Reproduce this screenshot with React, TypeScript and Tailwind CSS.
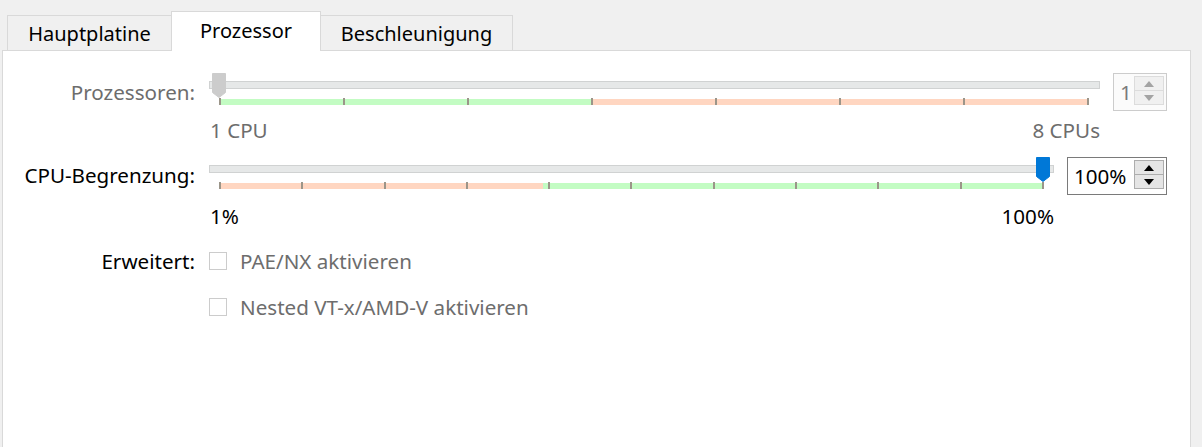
import React from "react";

const FONT = { fontFamily: '"Noto Sans", "Open Sans", sans-serif' };

type SliderProps = {
  ticks: number;
  split: string;
  lowColor: string;
  highColor: string;
  handlePos: "start" | "end";
  disabled?: boolean;
  minLabel: string;
  maxLabel: string;
  tickInset: string;
  labelGap: string;
};

function Handle({ blue }: { blue?: boolean }) {
  return (
    <svg width="14" height="25" viewBox="0 0 14 25">
      <path
        d="M0.5 0.5 H13.5 V19.5 L7 24.5 L0.5 19.5 Z"
        fill={blue ? "#0078d7" : "#cccccc"}
        stroke={blue ? "#0078d7" : "#cccccc"}
      />
    </svg>
  );
}

function Slider(props: SliderProps) {
  const tickList = Array.from({ length: props.ticks });
  return (
    <div className="flex-1 flex flex-col">
      <div className="relative h-[32px]">
        {/* groove */}
        <div className="mt-[8px] h-[8px] border border-[#d0d2d2] bg-[#e6e8e8]" />
        {/* tick bar */}
        <div className={"relative mt-[9px] h-[7px] ml-[10px] " + props.tickInset}>
          <div className="absolute left-0 right-0 bottom-0 h-[6px] flex">
            <div className={props.lowColor} style={{ width: props.split }} />
            <div className={"flex-1 " + props.highColor} />
          </div>
          <div className="absolute inset-0 flex justify-between">
            {tickList.map((_, i) => (
              <div key={i} className="w-[2px] h-full bg-[#9b9589] -ml-px first:ml-0" />
            ))}
          </div>
        </div>
        {props.handlePos === "start" ? (
          <div className="absolute top-0 left-[3px]">
            <Handle />
          </div>
        ) : (
          <div className="absolute top-0 right-[4px]">
            <Handle blue />
          </div>
        )}
      </div>
      <div
        className={
          "flex justify-between text-[20.6px] leading-[28px] pl-px " +
          props.labelGap +
          (props.disabled ? " text-[#6d6d6d]" : " text-black")
        }
      >
        <span>{props.minLabel}</span>
        <span>{props.maxLabel}</span>
      </div>
    </div>
  );
}

function Arrow({ up, color }: { up?: boolean; color: string }) {
  return (
    <svg width="10" height="6" viewBox="0 0 10 6">
      <path d={up ? "M0 6 L5 0 L10 6 Z" : "M0 0 L5 6 L10 0 Z"} fill={color} />
    </svg>
  );
}

function SpinBox({
  value,
  width,
  disabled,
}: {
  value: string;
  width: string;
  disabled?: boolean;
}) {
  const btn = disabled
    ? "border border-[#dcdcdc] bg-[#f0f0f0]"
    : "border border-[#adadad] bg-[#e5e5e5]";
  const arrow = disabled ? "#a3a3a3" : "#000000";
  return (
    <div
      className={
        "flex h-[38px] items-start " +
        width +
        (disabled
          ? " border border-[#cccccc] bg-[#fbfbfb]"
          : " border border-[#7a7a7a] bg-white")
      }
    >
      <div
        className={
          "flex-1 pl-[6px] text-[20.6px] leading-[36px] " +
          (disabled ? "text-[#7a7a7a]" : "text-black")
        }
      >
        {value}
      </div>
      <div className="mt-[2px] mr-[2px] flex flex-col w-[30px]">
        <div className={"h-[15px] flex items-center justify-center " + btn}>
          <Arrow up color={arrow} />
        </div>
        <div className={"h-[15px] -mt-px flex items-center justify-center " + btn}>
          <Arrow color={arrow} />
        </div>
      </div>
    </div>
  );
}

function CheckRow({ text }: { text: string }) {
  return (
    <div className="flex items-center gap-[13px] h-[28px]">
      <div className="w-[18px] h-[18px] border border-[#cccccc] bg-white" />
      <span className="text-[20.6px] leading-[28px] text-[#6d6d6d]">{text}</span>
    </div>
  );
}

export default function App() {
  return (
    <div className="w-[1202px] h-[447px] bg-[#f0f0f0] flex flex-col overflow-hidden" style={FONT}>
      {/* tabs */}
      <div className="pt-[11px] pl-[7px] flex items-end h-[50px]">
        <div className="w-[164px] h-[35px] border-t border-l border-[#d9d9d9] bg-[#f0f0f0] text-center text-[20px] leading-[28px] pt-[4px] text-black">
          Hauptplatine
        </div>
        <div className="relative z-10 -mb-px w-[150px] h-[40px] border-t border-x border-[#d9d9d9] bg-white text-center text-[20px] leading-[28px] pt-[5px] text-black">
          Prozessor
        </div>
        <div className="w-[192px] h-[35px] border-t border-r border-[#d9d9d9] bg-[#f0f0f0] text-center text-[20px] leading-[28px] pt-[4px] text-black">
          Beschleunigung
        </div>
      </div>

      {/* panel */}
      <div className="ml-[2px] w-[1189px] flex-1 border border-b-0 border-[#d9d9d9] bg-white pt-[22px] pr-[23px]">
        <div className="grid grid-cols-[192px_1fr] gap-x-[14px]">
          {/* Prozessoren */}
          <div className="text-right text-[20.6px] leading-[28px] pt-[5px] text-[#6d6d6d]">
            Prozessoren:
          </div>
          <div className="flex items-start gap-[13px]">
            <Slider
              ticks={8}
              split="42.86%"
              lowColor="bg-[#c3fcc3]"
              highColor="bg-[#ffd6c1]"
              handlePos="start"
              disabled
              minLabel="1 CPU"
              maxLabel="8 CPUs"
              tickInset="mr-[11px]"
              labelGap="mt-[11px]"
            />
            <SpinBox value="1" width="w-[54px]" disabled />
          </div>

          {/* CPU-Begrenzung */}
          <div className="mt-[13px] text-right text-[20.6px] leading-[28px] pt-[4px] text-black">
            CPU-Begrenzung:
          </div>
          <div className="mt-[13px] flex items-start gap-[13px]">
            <Slider
              ticks={11}
              split="39.3%"
              lowColor="bg-[#ffd6c1]"
              highColor="bg-[#c3fcc3]"
              handlePos="end"
              minLabel="1%"
              maxLabel="100%"
              tickInset="mr-[10px]"
              labelGap="mt-[13px]"
            />
            <SpinBox value="100%" width="w-[100px]" />
          </div>

          {/* Erweitert */}
          <div className="mt-[17px] text-right text-[20.6px] leading-[28px] text-black">
            Erweitert:
          </div>
          <div className="mt-[17px] flex flex-col gap-[18px]">
            <CheckRow text="PAE/NX aktivieren" />
            <CheckRow text="Nested VT-x/AMD-V aktivieren" />
          </div>
        </div>
      </div>
    </div>
  );
}
